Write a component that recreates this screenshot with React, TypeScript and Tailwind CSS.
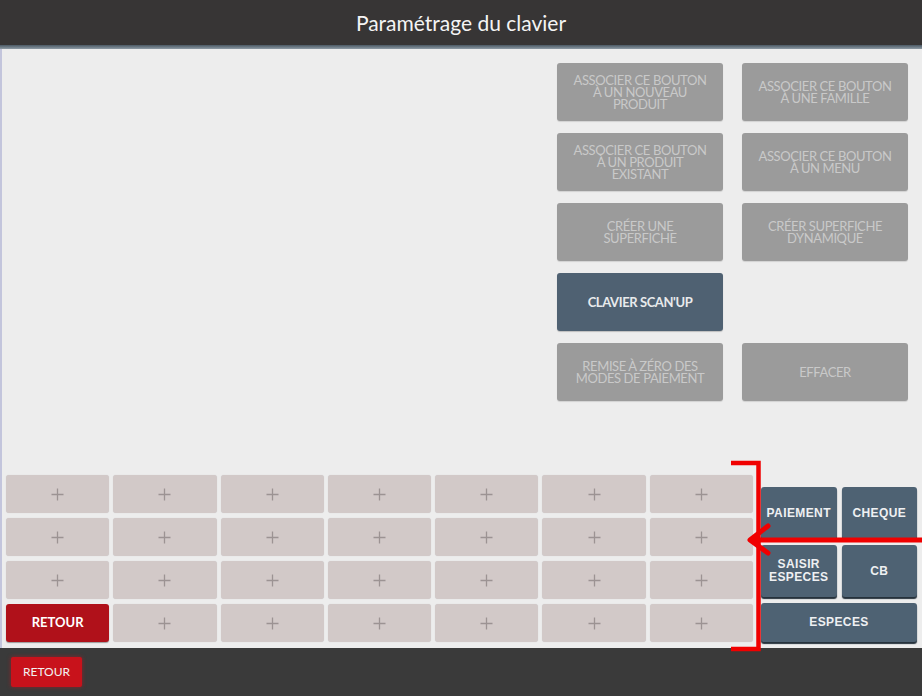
import { Fragment } from 'react';

const actionButtons: { label: string[]; active?: boolean; empty?: boolean }[] = [
  { label: ['ASSOCIER CE BOUTON', 'À UN NOUVEAU', 'PRODUIT'] },
  { label: ['ASSOCIER CE BOUTON', 'À UNE FAMILLE'] },
  { label: ['ASSOCIER CE BOUTON', 'À UN PRODUIT', 'EXISTANT'] },
  { label: ['ASSOCIER CE BOUTON', 'À UN MENU'] },
  { label: ['CRÉER UNE', 'SUPERFICHE'] },
  { label: ['CRÉER SUPERFICHE', 'DYNAMIQUE'] },
  { label: ["CLAVIER SCAN'UP"], active: true },
  { label: [], empty: true },
  { label: ['REMISE À ZÉRO DES', 'MODES DE PAIEMENT'] },
  { label: ['EFFACER'] }
];

const PlusIcon = () => (
  <svg width="13" height="13" viewBox="0 0 13 13" className="text-[#9c9393]">
    <path d="M6.5 0.5v12M0.5 6.5h12" stroke="currentColor" strokeWidth="1.3" fill="none" />
  </svg>
);

const ActionButton = ({ label, active, empty }: { label: string[]; active?: boolean; empty?: boolean }) => {
  if (empty) return <div />;
  return (
    <button
      type="button"
      className={
        active
          ? 'flex h-[58px] flex-col items-center justify-center rounded-[3px] bg-[#4f6172] text-[13px] font-bold leading-[13px] tracking-[-0.4px] text-[#e8eaec] shadow-[0_1px_1px_rgba(0,0,0,0.2)]'
          : 'flex h-[58px] flex-col items-center justify-center rounded-[3px] bg-[#9b9b9b] text-[13px] leading-[13px] tracking-[-0.4px] text-[#c9c9c9] shadow-[0_1px_1px_rgba(0,0,0,0.12)]'
      }
    >
      {label.map((l, i) => (
        <span key={i} className="block h-[12px] leading-[12px]">
          {l}
        </span>
      ))}
    </button>
  );
};

const PayButton = ({ children, className }: { children: React.ReactNode; className?: string }) => (
  <button
    type="button"
    className={`flex items-center justify-center rounded-[3px] bg-[#4e6273] text-center font-['Liberation_Sans',Arial,sans-serif] text-[12px] font-bold leading-[13px] tracking-[0.4px] text-[#eef0f2] shadow-[0_2px_1px_#26323c] ${className ?? ''}`}
  >
    {children}
  </button>
);

export default function App() {
  const cells = Array.from({ length: 28 }, (_, i) => i);

  return (
    <div className="relative flex h-[696px] w-[922px] flex-col overflow-hidden font-['Lato',sans-serif]">
      <header className="flex h-[45px] items-center justify-center bg-[#373535]">
        <h1 className="text-[21px] text-[#f4f4f4]">Paramétrage du clavier</h1>
      </header>
      <div className="h-[4px] bg-gradient-to-b from-[#4b5964] to-[#8e9ba5]" />

      <main className="flex flex-1 flex-col border-l-2 border-[#c3c5dc] bg-[#ededed]">
        <div className="flex justify-end pr-[14px] pt-[14px]">
          <div className="grid w-[351px] grid-cols-2 gap-x-[19px] gap-y-[12px]">
            {actionButtons.map((b, i) => (
              <ActionButton key={i} {...b} />
            ))}
          </div>
        </div>

        <div className="flex-1" />

        <div className="flex items-end pb-[6px] pl-[4px] pr-[5px]">
          <div className="grid w-[747px] grid-cols-7 gap-x-[4px] gap-y-[5px]">
            {cells.map((i) => (
              <Fragment key={i}>
                {i === 21 ? (
                  <button
                    type="button"
                    className="flex h-[38px] items-center justify-center rounded-[3px] bg-[#b0111a] text-[13px] font-bold text-white shadow-[0_1px_1px_rgba(0,0,0,0.35)]"
                  >
                    RETOUR
                  </button>
                ) : (
                  <div className="flex h-[38px] items-center justify-center rounded-[3px] bg-[#d2c9c8] shadow-[0_0_1px_rgba(0,0,0,0.15)]">
                    <PlusIcon />
                  </div>
                )}
              </Fragment>
            ))}
          </div>

          <div className="ml-[8px] grid w-[156px] grid-cols-2 grid-rows-[52px_52px_39px] gap-x-[5px] gap-y-[6px]">
            <PayButton>PAIEMENT</PayButton>
            <PayButton>CHEQUE</PayButton>
            <PayButton>
              SAISIR
              <br />
              ESPECES
            </PayButton>
            <PayButton>CB</PayButton>
            <PayButton className="col-span-2">ESPECES</PayButton>
          </div>
        </div>
      </main>

      <footer className="flex h-[48px] items-center bg-[#3a3a3a] px-[11px]">
        <button
          type="button"
          className="flex h-[30px] w-[71px] items-center justify-center rounded-[2px] bg-[#c8121b] text-[12px] text-[#f2f2f2] shadow-[0_0_4px_rgba(200,20,30,0.6)]"
        >
          RETOUR
        </button>
      </footer>

      {/* red annotation overlay */}
      <svg className="pointer-events-none absolute left-0 top-0" width="922" height="696">
        <g stroke="#f00000" fill="none">
          <path d="M731 463H758.5V649H731" strokeWidth="4.5" />
          <path d="M752 540H922" strokeWidth="5" />
          <path d="M768 526L750 540L768 553" strokeWidth="5" strokeLinecap="round" strokeLinejoin="round" />
        </g>
      </svg>
    </div>
  );
}
